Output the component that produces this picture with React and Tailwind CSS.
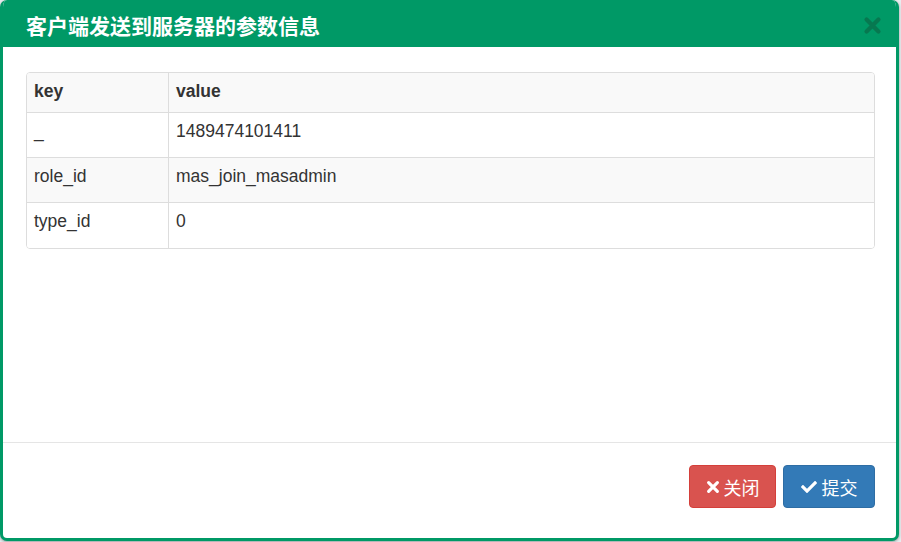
import React from "react";
import { FaCheck } from "react-icons/fa";

const rows = [
  { k: "_", v: "1489474101411" },
  { k: "role_id", v: "mas_join_masadmin" },
  { k: "type_id", v: "0" },
];

function BoldX({ className }) {
  return (
    <svg viewBox="0 0 16 16" className={className} fill="none">
      <path d="M3 3 L13 13 M13 3 L3 13" stroke="currentColor" strokeWidth="3.6" strokeLinecap="round" />
    </svg>
  );
}

export default function App() {
  return (
    <div
      className="w-[901px] h-[542px] bg-[#e9ecef] overflow-hidden"
      style={{ fontFamily: '"Liberation Sans", Arial, "Noto Sans CJK SC", sans-serif' }}
    >
      <div className="w-[899px] h-[541px] border-[3px] border-t-0 border-[#009966] rounded-[7px] bg-white overflow-hidden flex flex-col shadow-[0_1px_3px_rgba(0,0,0,0.35)]">
        <div className="h-[47px] bg-[#009966] flex items-center justify-between pl-[23px] pr-[14px] shrink-0">
          <h4
            className="text-white text-[21px] font-bold leading-none mt-[4px]"
            style={{ fontFamily: '"Noto Sans CJK SC", "Liberation Sans", sans-serif' }}
          >
            客户端发送到服务器的参数信息
          </h4>
          <BoldX className="text-[#0b6b47] opacity-70 w-[19px] h-[19px] mt-[4px]" />
        </div>
        <div className="flex-1 pt-[25px] pl-[23px] pr-[21px]">
          <div className="border border-[#dddddd] rounded-[4px] overflow-hidden text-[17.5px] text-[#333333]">
            <div className="flex h-[40px] bg-[#f9f9f9] border-b border-[#dddddd] font-bold">
              <div className="w-[142px] border-r border-[#dddddd] px-[7px] pt-[7px] leading-[22px]">key</div>
              <div className="flex-1 px-[7px] pt-[7px] leading-[22px]">value</div>
            </div>
            {rows.map((r, i) => (
              <div
                key={r.k}
                className={`flex h-[45px] ${i === 1 ? "bg-[#f9f9f9]" : "bg-white"} ${i < rows.length - 1 ? "border-b border-[#dddddd]" : ""}`}
              >
                <div className="w-[142px] border-r border-[#dddddd] px-[7px] pt-[7px] leading-[22px]">{r.k}</div>
                <div className="flex-1 px-[7px] pt-[7px] leading-[22px]">{r.v}</div>
              </div>
            ))}
          </div>
        </div>
        <div className="h-[96px] border-t border-[#e5e5e5] flex justify-end items-start pt-[22px] pr-[21px] gap-[7px] shrink-0">
          <button
            className="w-[87px] h-[43px] bg-[#d9534f] border border-[#d43f3a] rounded-[4px] text-white text-[18px] flex items-center justify-center gap-[4px]"
            style={{ fontFamily: '"Noto Sans CJK SC", sans-serif' }}
          >
            <BoldX className="w-[14px] h-[14px]" />
            <span className="leading-none">关闭</span>
          </button>
          <button
            className="w-[92px] h-[43px] bg-[#337ab7] border border-[#2e6da4] rounded-[4px] text-white text-[18px] flex items-center justify-center gap-[5px]"
            style={{ fontFamily: '"Noto Sans CJK SC", sans-serif' }}
          >
            <FaCheck className="w-[16px] h-[16px]" />
            <span className="leading-none">提交</span>
          </button>
        </div>
      </div>
    </div>
  );
}
